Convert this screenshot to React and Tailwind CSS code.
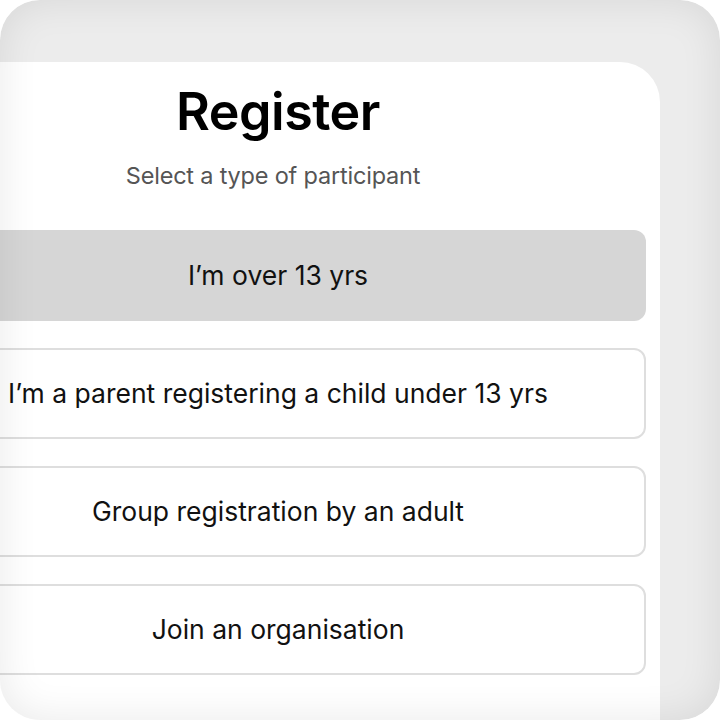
const options = [
  { label: "I’m over 13 yrs", active: true },
  { label: "I’m a parent registering a child under 13 yrs" },
  { label: "Group registration by an adult" },
  { label: "Join an organisation" },
];

export default function App() {
  return (
    <div className="w-[720px] h-[720px] bg-white">
      <div
        className="relative w-[720px] h-[720px] overflow-hidden rounded-[40px] bg-[#ececec]"
        style={{ fontFamily: "Inter, 'Noto Sans', sans-serif" }}
      >
        <div className="mt-[62px] ml-[-104px] w-[764px] h-[700px] bg-white rounded-tr-[40px] px-[14px] pt-[20px] flex flex-col items-center">
          <h1 className="text-[52px] leading-[60px] font-semibold text-black tracking-[-0.5px]">Register</h1>
          <p className="mt-[19px] mr-[10px] text-[23.5px] leading-[30px] text-[#555555] tracking-[-0.2px]">Select a type of participant</p>
          <div className="mt-[39px] w-full flex flex-col gap-[27px]">
            {options.map((o) => (
              <button
                key={o.label}
                type="button"
                className={`h-[91px] w-full rounded-[12px] flex items-center justify-center text-[26.5px] text-[#111111] ${
                  o.active ? "bg-[#d6d6d6]" : "bg-white border-2 border-[#dedede]"
                }`}
              >
                {o.label}
              </button>
            ))}
          </div>
        </div>
        <div className="pointer-events-none absolute inset-0 rounded-[40px] shadow-[inset_0_0_40px_rgba(0,0,0,0.09)]"></div>
      </div>
    </div>
  );
}
